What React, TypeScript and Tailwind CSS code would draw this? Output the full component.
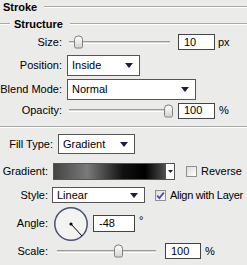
import React from "react";

function Etch({ className = "" }: { className?: string }) {
  return <div className={`h-[2px] border-t border-b border-t-[#a9a9a7] border-b-white ${className}`} />;
}

function Arrow() {
  return (
    <svg width="8" height="5" viewBox="0 0 8 5">
      <path d="M0 0H8L4 5Z" fill="#1c1c4c" />
    </svg>
  );
}

function Label({ text, className }: { text: string; className: string }) {
  return <span className={`shrink-0 text-right ${className}`}>{text}</span>;
}

function Select({ value, className }: { value: string; className: string }) {
  return (
    <div className={`flex h-full items-center justify-between border border-[#555555] bg-white pl-[4px] pr-[6px] ${className}`}>
      <span>{value}</span>
      <Arrow />
    </div>
  );
}

function Field({ value, className }: { value: string; className: string }) {
  return (
    <div className={`flex h-[16px] items-center border border-[#444444] bg-white pl-[5px] ${className}`}>
      {value}
    </div>
  );
}

function Slider({ className, thumb }: { className: string; thumb: string }) {
  return (
    <div className={`relative flex h-full items-center ${className}`}>
      <div className="h-[3px] w-full border-t border-b border-t-[#9c9c9c] border-b-white bg-[#d6d6d4]" />
      <div className={`absolute top-1/2 h-[13px] w-[9px] -translate-y-1/2 rounded-t-[4px] rounded-b-[2px] border border-[#7f7f7f] bg-gradient-to-b from-white to-[#d4d4d2] ${thumb}`} />
    </div>
  );
}

function Check({ checked }: { checked?: boolean }) {
  return (
    <div className="flex h-[11px] w-[11px] shrink-0 items-center justify-center border border-[#8f9092] bg-gradient-to-br from-[#dcdcd8] to-white">
      {checked && (
        <svg width="9" height="9" viewBox="0 0 9 9">
          <path d="M1.2 4.6L3.4 7L7.8 1.6" stroke="#4b4bb4" strokeWidth="1.8" fill="none" />
        </svg>
      )}
    </div>
  );
}

function Dial() {
  return (
    <svg width="34" height="34" viewBox="0 0 34 34" className="shrink-0">
      <circle cx="17" cy="17" r="16.2" fill="#f3f3f1" stroke="#4a5274" strokeWidth="1.5" />
      <line x1="17" y1="17" x2="28" y2="29" stroke="#000" strokeWidth="1" />
      <circle cx="17" cy="17" r="1.6" fill="#000" />
    </svg>
  );
}

export default function App() {
  return (
    <div className="flex h-[265px] w-[247px] flex-col overflow-hidden bg-[#ebebe9] font-['Liberation_Sans',Arial,sans-serif] text-[11px] leading-none text-black">
      <div className="flex h-[14px] items-center pl-[3px]">
        <span className="font-bold">Stroke</span>
        <Etch className="ml-[7px] flex-1" />
      </div>
      <div className="mt-[3px] flex h-[14px] items-center">
        <Etch className="w-[10px]" />
        <span className="ml-[4px] font-bold">Structure</span>
        <Etch className="ml-[7px] flex-1" />
      </div>

      <div className="mt-[2px] flex h-[18px] items-center">
        <Label text="Size:" className="w-[62px]" />
        <Slider className="ml-[7px] w-[101px]" thumb="left-[5px]" />
        <Field value="10" className="ml-[8px] w-[37px]" />
        <span className="ml-[3px]">px</span>
      </div>

      <div className="mt-[4px] flex h-[21px] items-center">
        <Label text="Position:" className="w-[62px]" />
        <Select value="Inside" className="ml-[5px] w-[73px]" />
      </div>

      <div className="mt-[3px] flex h-[21px] items-center">
        <Label text="Blend Mode:" className="w-[62px]" />
        <Select value="Normal" className="ml-[5px] w-[129px]" />
      </div>

      <div className="mt-[2px] flex h-[17px] items-center">
        <Label text="Opacity:" className="w-[62px]" />
        <Slider className="ml-[7px] w-[101px]" thumb="left-[95px]" />
        <Field value="100" className="ml-[8px] w-[37px]" />
        <span className="ml-[4px]">%</span>
      </div>

      <Etch className="mt-[7px] w-full" />

      <div className="mt-[6px] flex h-[20px] items-center">
        <Label text="Fill Type:" className="w-[53px]" />
        <Select value="Gradient" className="ml-[5px] w-[77px]" />
      </div>

      <div className="mt-[9px] flex h-[17px] items-center">
        <Label text="Gradient:" className="w-[48px]" />
        <div className="ml-[5px] h-full w-[113px] border border-[#555555] bg-[linear-gradient(to_right,#444444,#7a7a7a_30%,#121212_62%,#000000_82%,#4e4e4e)]" />
        <div className="flex h-full w-[9px] items-center justify-center border border-l-0 border-[#555555] bg-white">
          <svg width="5" height="3" viewBox="0 0 5 3">
            <path d="M0 0H5L2.5 3Z" fill="#222" />
          </svg>
        </div>
        <div className="ml-[11px]">
          <Check />
        </div>
        <span className="ml-[4px]">Reverse</span>
      </div>

      <div className="mt-[7px] flex h-[16px] items-center">
        <Label text="Style:" className="w-[48px]" />
        <Select value="Linear" className="ml-[4px] w-[93px]" />
        <div className="ml-[10px]">
          <Check checked />
        </div>
        <span className="ml-[4px] whitespace-nowrap tracking-[-0.3px]">Align with Layer</span>
      </div>

      <div className="mt-[3px] flex h-[35px] items-center">
        <Label text="Angle:" className="w-[48px]" />
        <div className="ml-[6px]">
          <Dial />
        </div>
        <Field value="-48" className="ml-[5px] h-[17px] w-[42px] pl-[4px]" />
        <span className="ml-[4px] -mt-[6px]">°</span>
      </div>

      <div className="mt-[2px] flex h-[16px] items-center">
        <Label text="Scale:" className="w-[48px]" />
        <Slider className="ml-[9px] w-[99px]" thumb="left-[57px]" />
        <Field value="100" className="ml-[9px] w-[36px]" />
        <span className="ml-[4px]">%</span>
      </div>
    </div>
  );
}
